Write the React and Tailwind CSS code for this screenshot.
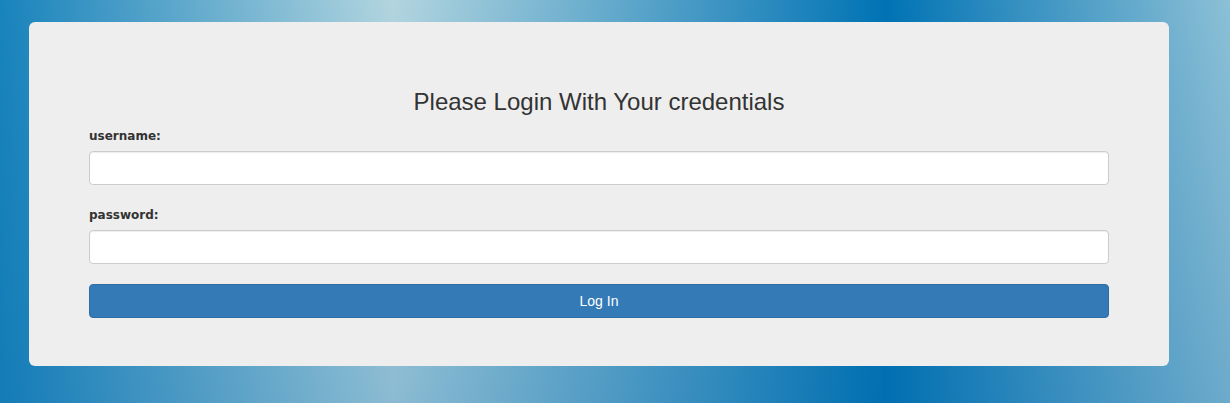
import React, { useState } from 'react';

function App() {
  const [form, setForm] = useState({ username: '', password: '' });

  const handleChange = (e) => {
    setForm({ ...form, [e.target.name]: e.target.value });
  };

  const handleSubmit = (e) => {
    e.preventDefault();
  };

  return (
    <div className="min-h-screen pt-[22px] pl-[29px] bg-[linear-gradient(to_bottom,rgba(0,90,160,0)_0%,rgba(0,95,165,0.22)_100%),linear-gradient(to_right,#1883bc_0%,#b2d5df_32%,#0073b4_72%,#8cc0d6_100%)]">
      <div className="w-[1140px] rounded-[6px] bg-[#eeeeee] pt-[67px] px-[60px] pb-[48px]">
        <h3 className="text-center text-[24px] leading-[26.4px] text-[#333333] mb-[11px] font-['Liberation_Sans',Arial,sans-serif]">
          Please Login With Your credentials
        </h3>
        <form onSubmit={handleSubmit} className="font-['Liberation_Sans',Arial,sans-serif]">
          <label htmlFor="username" className="block mb-[5px] text-[12px] leading-[20px] font-bold text-[#333333] font-['DejaVu_Sans',Verdana,sans-serif]">
            username:
          </label>
          <input
            id="username" name="username" type="text"
            className="block w-full h-[34px] px-3 bg-white border border-[#cccccc] rounded-[4px] shadow-[inset_0_1px_1px_rgba(0,0,0,0.075)] text-[14px] text-[#555555] outline-none"
            value={form.username} onChange={handleChange}
          />
          <label htmlFor="password" className="block mt-[20px] mb-[5px] text-[12px] leading-[20px] font-bold text-[#333333] font-['DejaVu_Sans',Verdana,sans-serif]">
            password:
          </label>
          <input
            id="password" name="password" type="password"
            className="block w-full h-[34px] px-3 bg-white border border-[#cccccc] rounded-[4px] shadow-[inset_0_1px_1px_rgba(0,0,0,0.075)] text-[14px] text-[#555555] outline-none"
            value={form.password} onChange={handleChange}
          />
          <button
            type="submit"
            className="block w-full h-[34px] mt-[20px] bg-[#337ab7] border border-[#2e6da4] rounded-[4px] text-white text-[14px] leading-[20px]"
          >
            Log In
          </button>
        </form>
      </div>
    </div>
  );
}

export default App;
